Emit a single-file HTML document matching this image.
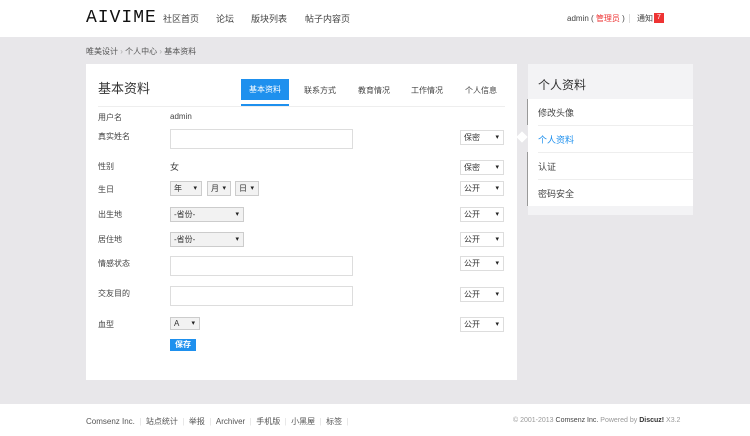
<!DOCTYPE html>
<html><head><meta charset="utf-8"><style>
*{margin:0;padding:0;box-sizing:border-box}
body{width:750px;height:436px;overflow:hidden;background:#e8e7ea;font-family:"Liberation Sans","Noto Sans CJK SC",sans-serif;font-size:8px;color:#444;position:relative}
.a{position:absolute;white-space:nowrap}
.hdr{left:0;top:0;width:750px;height:37px;background:#fff}
.sel{position:absolute;height:15px;border:1px solid #ddd;background:#fff;font-size:8px;line-height:13px;padding-left:3px;color:#333}
.sel:after{content:"▾";position:absolute;right:4px;top:0;font-size:7px;color:#222}
.sel.g{background:#f2f2f2;border-color:#ccc}
.inp{position:absolute;left:170px;width:183px;height:20px;border:1px solid #ddd;background:#fff}
.lb{position:absolute;left:98px;font-size:8px;color:#444}
.tab{position:absolute;top:85px;font-size:8px;color:#444}
.sb{position:absolute;left:538px;font-size:9px;color:#444}
.sep{position:absolute;left:538px;width:155px;height:1px;background:#eee}
.fl{color:#555;font-size:8px}
</style></head><body>
<div class="a hdr"></div>
<div class="a" style="left:86px;top:8px;font-family:'Liberation Mono',monospace;font-size:18px;color:#111;letter-spacing:1px">AIVIME</div>
<div class="a" style="left:163px;top:12px;font-size:9px;color:#444">社区首页</div>
<div class="a" style="left:216px;top:12px;font-size:9px;color:#444">论坛</div>
<div class="a" style="left:251px;top:12px;font-size:9px;color:#444">版块列表</div>
<div class="a" style="left:305px;top:12px;font-size:9px;color:#444">帖子内容页</div>
<div class="a" style="left:567px;top:13px;font-size:8px;color:#444">admin ( <span style="color:#e33">管理员</span> )</div>
<div class="a" style="left:629px;top:14px;width:1px;height:9px;background:#ddd"></div>
<div class="a" style="left:637px;top:13px;font-size:8px;color:#444">通知</div>
<div class="a" style="left:654px;top:13px;width:10px;height:10px;background:#e33;color:#fff;font-size:7px;text-align:center;line-height:10px">7</div>
<div class="a" style="left:86px;top:46px;font-size:8px;color:#555">唯美设计 <span style="color:#aaa">›</span> 个人中心 <span style="color:#aaa">›</span> 基本资料</div>

<div class="a" style="left:86px;top:64px;width:431px;height:316px;background:#fff"></div>
<div class="a" style="left:98px;top:78px;font-size:13px;color:#333">基本资料</div>
<div class="a" style="left:241px;top:79px;width:48px;height:21px;background:#1e90ee;color:#fff;font-size:8px;text-align:center;line-height:21px">基本资料</div>
<div class="a" style="left:241px;top:104px;width:48px;height:2px;background:#1e90ee"></div>
<div class="a" style="left:98px;top:106px;width:407px;height:1px;background:#eee"></div>
<div class="tab" style="left:304px">联系方式</div>
<div class="tab" style="left:358px">教育情况</div>
<div class="tab" style="left:411px">工作情况</div>
<div class="tab" style="left:465px">个人信息</div>

<div class="lb" style="top:112px">用户名</div><div class="a" style="left:170px;top:112px;font-size:8px">admin</div>
<div class="lb" style="top:131px">真实姓名</div><div class="inp" style="top:129px"></div>
<div class="lb" style="top:161px">性别</div><div class="a" style="left:170px;top:160px;font-size:9px">女</div>
<div class="lb" style="top:184px">生日</div>
<div class="sel g" style="left:170px;top:181px;width:32px">年</div>
<div class="sel g" style="left:207px;top:181px;width:24px">月</div>
<div class="sel g" style="left:235px;top:181px;width:24px">日</div>
<div class="lb" style="top:209px">出生地</div><div class="sel g" style="left:170px;top:207px;width:74px">-省份-</div>
<div class="lb" style="top:234px">居住地</div><div class="sel g" style="left:170px;top:232px;width:74px">-省份-</div>
<div class="lb" style="top:258px">情感状态</div><div class="inp" style="top:256px"></div>
<div class="lb" style="top:288px">交友目的</div><div class="inp" style="top:286px"></div>
<div class="lb" style="top:319px">血型</div><div class="sel g" style="left:170px;top:317px;width:30px;height:13px;line-height:11px">A</div>
<div class="a" style="left:170px;top:339px;width:26px;height:12px;background:#1e90ee;color:#fff;font-size:8px;text-align:center;line-height:12px;font-weight:bold">保存</div>

<div class="sel" style="left:460px;top:130px;width:44px">保密</div>
<div class="sel" style="left:460px;top:160px;width:44px">保密</div>
<div class="sel" style="left:460px;top:181px;width:44px">公开</div>
<div class="sel" style="left:460px;top:207px;width:44px">公开</div>
<div class="sel" style="left:460px;top:232px;width:44px">公开</div>
<div class="sel" style="left:460px;top:256px;width:44px">公开</div>
<div class="sel" style="left:460px;top:287px;width:44px">公开</div>
<div class="sel" style="left:460px;top:317px;width:44px">公开</div>

<div class="a" style="left:528px;top:64px;width:165px;height:151px;background:#fff"></div>
<div class="a" style="left:528px;top:64px;width:165px;height:35px;background:#f3f3f5"></div>
<div class="a" style="left:538px;top:76px;font-size:12px;color:#333">个人资料</div>
<div class="a" style="left:518px;top:133px;width:8px;height:8px;background:#fff;transform:rotate(45deg)"></div>
<div class="a" style="left:527px;top:99px;width:1px;height:26px;background:#999"></div>
<div class="a" style="left:527px;top:152px;width:1px;height:54px;background:#999"></div>
<div class="sb" style="top:106px">修改头像</div><div class="sep" style="top:125px"></div>
<div class="sb" style="top:133px;color:#1e90ee">个人资料</div><div class="sep" style="top:152px"></div>
<div class="sb" style="top:160px">认证</div><div class="sep" style="top:179px"></div>
<div class="sb" style="top:187px">密码安全</div>
<div class="a" style="left:528px;top:206px;width:165px;height:9px;background:#f3f3f5"></div>

<div class="a" style="left:0;top:404px;width:750px;height:32px;background:#fff"></div>
<div class="a fl" style="left:86px;top:416px">Comsenz Inc. <span style="color:#ddd">&nbsp;|&nbsp;</span> 站点统计 <span style="color:#ddd">&nbsp;|&nbsp;</span> 举报 <span style="color:#ddd">&nbsp;|&nbsp;</span> Archiver <span style="color:#ddd">&nbsp;|&nbsp;</span> 手机版 <span style="color:#ddd">&nbsp;|&nbsp;</span> 小黑屋 <span style="color:#ddd">&nbsp;|&nbsp;</span> 标签 <span style="color:#ddd">&nbsp;|</span></div>
<div class="a" style="left:513px;top:417px;font-size:7px;color:#999">© 2001-2013 <span style="color:#444">Comsenz Inc.</span> Powered by <span style="color:#333;font-weight:bold">Discuz!</span> X3.2</div>
</body></html>
